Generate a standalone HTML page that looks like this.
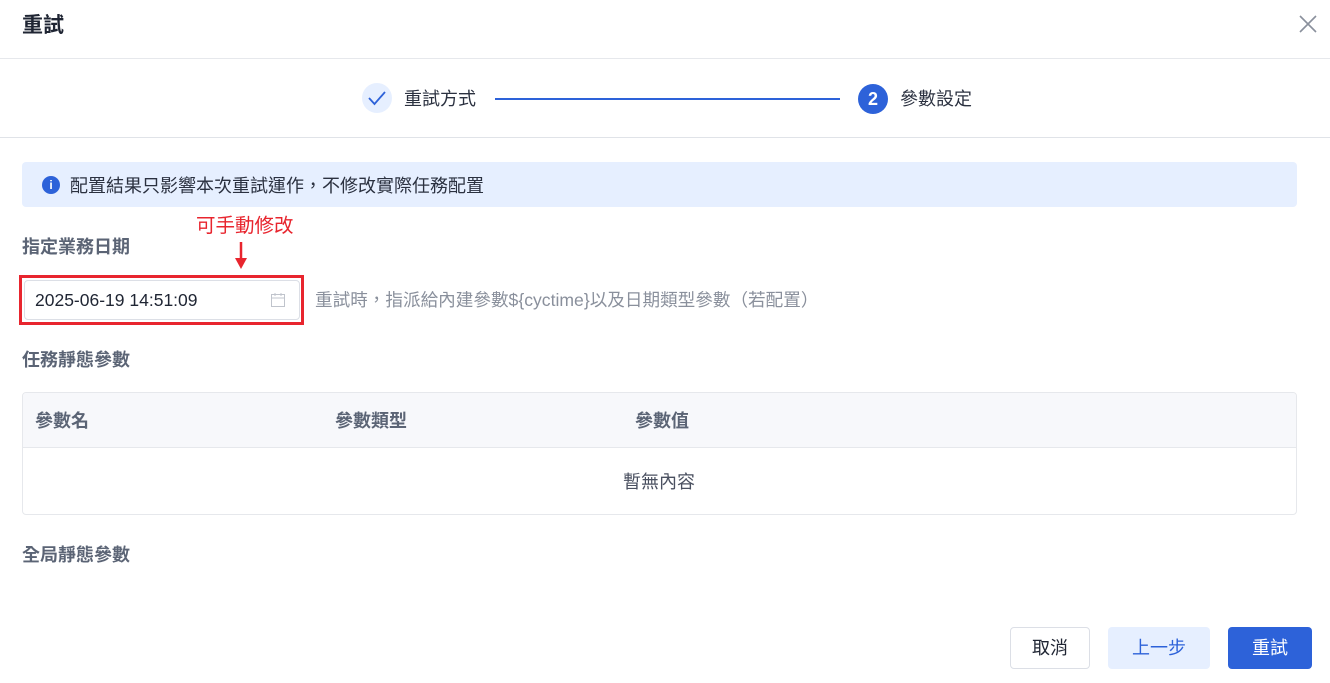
<!DOCTYPE html>
<html><head><meta charset="utf-8"><style>
*{box-sizing:border-box;margin:0;padding:0}
body{width:1330px;height:683px;background:#fff;font-family:"Liberation Sans","Noto Sans CJK TC",sans-serif;color:#1f2533;position:relative;overflow:hidden}
.a{position:absolute;line-height:1.2}
.h{font-size:18px;font-weight:bold;color:#5b6475}
</style></head><body>
<div class="a" style="left:22px;top:13px;font-size:21px;font-weight:bold;color:#1f2533">重試</div>
<svg class="a" style="left:1298px;top:14px" width="20" height="20"><path d="M2 2L18 18M18 2L2 18" stroke="#8a909c" stroke-width="1.6"/></svg>
<div class="a" style="left:0;top:58px;width:1330px;height:1px;background:#e6e8ec"></div>
<div class="a" style="left:362px;top:83px;width:30px;height:30px;border-radius:50%;background:#e6efff"></div>
<svg class="a" style="left:362px;top:83px" width="30" height="30"><path d="M7 15L12.5 21L23 9" stroke="#2d62d9" stroke-width="1.8" fill="none"/></svg>
<div class="a" style="left:404px;top:89px;font-size:18px;color:#2b3140">重試方式</div>
<div class="a" style="left:495px;top:98px;width:345px;height:2px;background:#2d62d9"></div>
<div class="a" style="left:858px;top:84px;width:30px;height:30px;border-radius:50%;background:#2d62d9;color:#fff;font-size:18px;font-weight:bold;text-align:center;line-height:30px">2</div>
<div class="a" style="left:900px;top:89px;font-size:18px;color:#2b3140">參數設定</div>
<div class="a" style="left:0;top:137px;width:1330px;height:1px;background:#e0e3e8"></div>
<div class="a" style="left:22px;top:162px;width:1275px;height:45px;background:#e6efff;border-radius:4px"></div>
<div class="a" style="left:42px;top:176px;width:18px;height:18px;border-radius:50%;background:#2d62d9;color:#fff;font-size:12px;font-weight:bold;text-align:center;line-height:18px">i</div>
<div class="a" style="left:70px;top:176px;font-size:18px;color:#2b3140">配置結果只影響本次重試運作，不修改實際任務配置</div>
<div class="a" style="left:196px;top:215px;font-size:19.5px;color:#e8252e">可手動修改</div>
<svg class="a" style="left:234px;top:242px" width="14" height="28"><path d="M7 0V18" stroke="#e8252e" stroke-width="2.5"/><path d="M1 16L7 27L13 16Z" fill="#e8252e"/></svg>
<div class="a h" style="left:22px;top:237px">指定業務日期</div>
<div class="a" style="left:19px;top:275px;width:285px;height:50px;border:3px solid #e8252e"></div>
<div class="a" style="left:24px;top:280px;width:276px;height:40px;border:1px solid #dcdfe6;border-radius:4px"></div>
<div class="a" style="left:35px;top:290px;font-size:17.5px;color:#1f2533">2025-06-19 14:51:09</div>
<svg class="a" style="left:270px;top:292px" width="16" height="16"><rect x="1.5" y="2.5" width="13" height="12" fill="none" stroke="#c0c4cc"/><path d="M1.5 6H14.5M5 1V4M11 1V4" stroke="#c0c4cc"/></svg>
<div class="a" style="left:315px;top:290px;font-size:17.6px;color:#8a909c">重試時，指派給內建參數${cyctime}以及日期類型參數（若配置）</div>
<div class="a h" style="left:22px;top:350px">任務靜態參數</div>
<div class="a" style="left:22px;top:392px;width:1275px;height:123px;border:1px solid #e6e8ec;border-radius:4px;overflow:hidden">
<div style="height:55px;background:#f7f8fb;border-bottom:1px solid #e6e8ec"></div></div>
<div class="a h" style="left:35px;top:411px">參數名</div>
<div class="a h" style="left:335px;top:411px">參數類型</div>
<div class="a h" style="left:635px;top:411px">參數值</div>
<div class="a" style="left:623px;top:472px;font-size:18px;color:#4a5060">暫無內容</div>
<div class="a h" style="left:22px;top:545px">全局靜態參數</div>
<div class="a" style="left:1010px;top:627px;width:80px;height:42px;border:1px solid #dcdfe6;border-radius:4px;text-align:center;line-height:40px;font-size:18px">取消</div>
<div class="a" style="left:1108px;top:627px;width:102px;height:42px;background:#e6efff;border-radius:4px;text-align:center;line-height:42px;font-size:18px;color:#2d62d9">上一步</div>
<div class="a" style="left:1228px;top:627px;width:84px;height:42px;background:#2d62d9;border-radius:4px;text-align:center;line-height:42px;font-size:18px;color:#fff">重試</div>
</body></html>
